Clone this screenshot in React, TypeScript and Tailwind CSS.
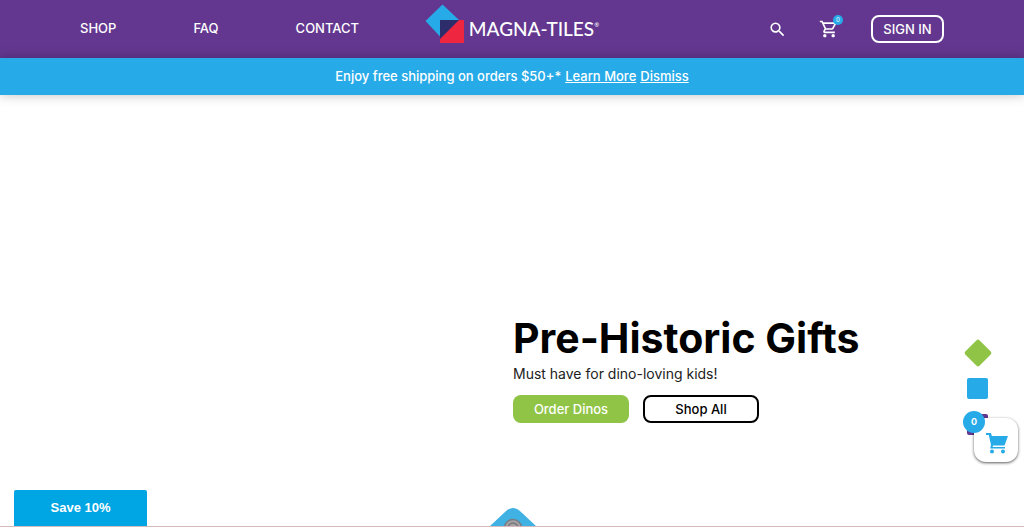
import { MdOutlineShoppingCart, MdSearch } from 'react-icons/md';

const navLinks = [
  { label: 'SHOP', href: '#shop' },
  { label: 'FAQ', href: '#faq' },
  { label: 'CONTACT', href: '#contact' },
];

const Logo = () => (
  <a href="#home" className="flex items-end gap-1 text-white">
    <svg className="h-10 w-10" viewBox="0 0 40 40" aria-hidden="true">
      <path d="M17.5 0.5 34 16 16 33.5 0.5 17Z" fill="#27aae8" />
      <path d="M15 16H39V38.5Q39 39 38.5 39H15.5Q15 39 15 38.5Z" fill="#ee2640" />
      <path d="M15 16H34L15 35Z" fill="#2d2d6b" />
    </svg>
    <span className="flex items-start pb-[3px] font-['Lato',sans-serif] text-[19px] leading-6 font-medium">
      MAGNA-TILES
      <span className="text-[6px] leading-4">®</span>
    </span>
  </a>
);

const Header = () => (
  <header className="grid h-[58px] grid-cols-[1fr_auto_1fr] items-center bg-[#63378f] px-20">
    <nav className="flex gap-[77px] text-[13px] font-medium text-white">
      {navLinks.map((link) => (
        <a key={link.label} href={link.href}>
          {link.label}
        </a>
      ))}
    </nav>
    <div className="pb-[10px]">
      <Logo />
    </div>
    <div className="flex items-center justify-end text-white">
      <button type="button" aria-label="Search" className="mr-8">
        <MdSearch size={19} />
      </button>
      <button type="button" aria-label="Cart" className="relative mr-8">
        <MdOutlineShoppingCart size={20} />
        <span className="absolute -top-1 -right-1 size-[10px] rounded-full bg-[#27aae8] text-center text-[6px] leading-[10px]">
          0
        </span>
      </button>
      <button type="button" className="h-7 w-[73px] rounded-lg border-2 border-white text-[13px] leading-6 font-medium">
        SIGN IN
      </button>
    </div>
  </header>
);

const Banner = () => (
  <div className="relative flex h-[37px] items-center justify-center gap-1 bg-[#27aae8] text-[13px] font-medium text-white shadow-[0_0_12px_rgba(0,0,0,0.25)]">
    <span>Enjoy free shipping on orders $50+*</span>
    <a href="#shipping" className="underline">
      Learn More
    </a>
    <button type="button" className="underline">
      Dismiss
    </button>
  </div>
);

const Hero = () => (
  <main className="grid flex-1 grid-cols-2 pt-[219px]">
    <section className="col-start-2 pl-px">
      <h1 className="text-[41px] leading-12 font-bold">Pre-Historic Gifts</h1>
      <p className="text-[14px] leading-6 text-[#222]">Must have for dino-loving kids!</p>
      <div className="mt-[9px] flex gap-[14px] text-[13px] font-medium">
        <a href="#dinos" className="h-7 w-[116px] rounded-lg bg-[#8fc446] text-center leading-7 text-white">
          Order Dinos
        </a>
        <a href="#all" className="h-7 w-[116px] rounded-lg border-2 border-black text-center leading-6">
          Shop All
        </a>
      </div>
    </section>
  </main>
);

const SlidePicker = () => (
  <div className="fixed top-[343px] right-9 flex flex-col items-center gap-[15px]">
    <button type="button" aria-label="Slide 1" className="size-5 rotate-45 rounded-xs bg-[#8fc446]" />
    <button type="button" aria-label="Slide 2" className="size-[21px] rounded-xs bg-[#27aae8]" />
    <button type="button" aria-label="Slide 3" className="size-[21px] rounded-xs bg-[#63378f]" />
  </div>
);

const FloatingCart = () => (
  <button
    type="button"
    aria-label="Open cart"
    className="fixed top-[418px] right-[6px] flex size-11 items-center justify-center rounded-xl bg-white pt-1.5 pl-0.5 text-[#27aae8] shadow-[0_1px_3px_rgba(0,0,0,0.65)]"
  >
    <svg className="h-[22px] w-[22px]" viewBox="0 0 22 22" fill="currentColor" aria-hidden="true">
      <path d="M0 1H5L5.8 4H22L18.5 13.5H7L6.6 15H19V16.5H4.2L5 13 2.8 3H0Z" />
      <circle cx="6" cy="19.5" r="2" />
      <circle cx="17" cy="19.5" r="2" />
    </svg>
    <span className="absolute -top-[7px] -left-[11px] size-[22px] rounded-full bg-[#27aae8] text-center text-[9px] leading-[22px] font-bold text-white">
      0
    </span>
  </button>
);

const Footer = () => (
  <footer className="relative flex h-[37px] items-end overflow-hidden border-b border-[#d5b9bc] pl-[14px]">
    <button
      type="button"
      className="h-9 w-[133px] rounded-t-xs bg-[#00a5e3] font-['Liberation_Sans',sans-serif] text-[13px] font-bold text-white"
    >
      Save 10%
    </button>
    <svg className="absolute bottom-0 left-1/2 h-[18px] w-[46px] -translate-x-[22px]" viewBox="0 0 46 18" aria-hidden="true">
      <path d="M0 18 15 4Q23 -4 31 4L46 18Z" fill="#3fb1e2" />
      <circle cx="23" cy="20" r="8.5" fill="#a5a3a6" stroke="#777b82" strokeWidth="1.5" />
      <circle cx="23" cy="20" r="5" fill="none" stroke="#777" strokeWidth="1.5" />
    </svg>
  </footer>
);

const App = () => (
  <div className="flex min-h-screen flex-col bg-white font-['Inter',sans-serif] text-black">
    <Header />
    <Banner />
    <Hero />
    <SlidePicker />
    <FloatingCart />
    <Footer />
  </div>
);

export default App;
